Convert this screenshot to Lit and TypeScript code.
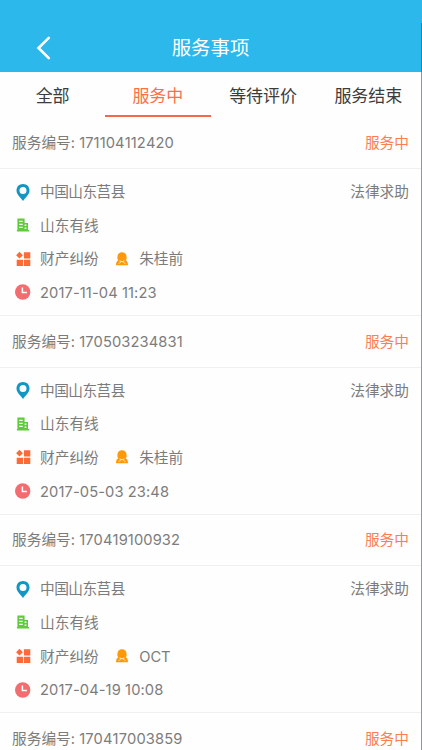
import { LitElement, html, css, svg } from "lit";
import { customElement, property, state } from "lit/decorators.js";

interface ServiceItem {
  id: string;
  status: string;
  place: string;
  kind: string;
  company: string;
  category: string;
  person: string;
  time: string;
}

const common = { status: "服务中", place: "中国山东莒县", kind: "法律求助", company: "山东有线", category: "财产纠纷" };
const ITEMS: ServiceItem[] = [
  { ...common, id: "171104112420", person: "朱桂前", time: "2017-11-04 11:23" },
  { ...common, id: "170503234831", person: "朱桂前", time: "2017-05-03 23:48" },
  { ...common, id: "170419100932", person: "OCT", time: "2017-04-19 10:08" },
];
const NEXT = { id: "170417003859", status: "服务中" };

const ICONS = {
  pin: svg`<path fill="#1296c4" fill-rule="evenodd" d="M8 0.1C4.1 0.1 1.5 2.9 1.5 6.6C1.5 10.4 5.2 13.4 8 16.9C10.8 13.4 14.5 10.4 14.5 6.6C14.5 2.9 11.9 0.1 8 0.1ZM8 3.1A3.5 3.5 0 1 1 8 10.1A3.5 3.5 0 1 1 8 3.1Z"/>`,
  building: svg`<path fill="#5fcb3c" fill-rule="evenodd" d="M2.4 1.4H9.6V6H13V13H14V14.4H1.9V13H2.4ZM4.2 3.8V5H7.7V3.8ZM4.2 6.8V8H7.7V6.8ZM4.2 9.8V11H7.7V9.8ZM9.6 7.5V8.9H11.4V7.5ZM9.6 10.6V12H11.4V10.6Z"/>`,
  grid: svg`<path fill="#fd6a38" d="M4.5 0.8L7.9 4.2L4.5 7.6L1.1 4.2ZM8.9 1.3H15.3V7.5H8.9ZM1.7 8.8H8V15.1H1.7ZM8.9 8.8H15.3V15.1H8.9Z"/>`,
  person: svg`<path fill="#fe9a0a" d="M8 1.3C10.8 1.3 12.6 3.3 12.6 5.9V8L11.7 9.2C13.2 10 14 11.4 14 14.3H2C2 11.4 2.8 10 4.3 9.2L3.4 8V5.9C3.4 3.3 5.2 1.3 8 1.3Z"/><path d="M5.6 9.9L8 10.8L10.4 9.9M6.6 11L4.8 12.8M9.4 11L11.2 12.8" fill="none" stroke="#fff" stroke-width="0.8"/>`,
  clock: svg`<circle cx="7.7" cy="8" r="7.7" fill="#f36c6f"/><path d="M7.4 3.4V8.4H11.9" fill="none" stroke="#fff" stroke-width="1.5"/>`,
};

@customElement("service-icon")
class ServiceIcon extends LitElement {
  static styles = css`
    :host { display: block; width: 16px; height: 17px; flex: none; }
    .glyph { display: block; overflow: visible; }
  `;
  @property() name: keyof typeof ICONS = "pin";
  render() {
    return html`<svg class="glyph" width="16" height="17" viewBox="0 0 16 17">${ICONS[this.name]}</svg>`;
  }
}

@customElement("service-head")
class ServiceHead extends LitElement {
  static styles = css`
    :host { height: 50.75px; padding: 0.5px 12px 0; display: flex; align-items: center; justify-content: space-between; box-sizing: border-box; color: #7c7c7c; font-size: 14.7px; line-height: 20px; }
    .num { font-kerning: none; letter-spacing: 0.1px; }
    .status { color: #fb7e52; }
  `;
  @property() number = "";
  @property() status = "";
  render() {
    return html`<span>服务编号: <span class="num">${this.number}</span></span><span class="status">${this.status}</span>`;
  }
}

@customElement("service-card")
class ServiceCard extends LitElement {
  static styles = css`
    :host { display: block; height: 198.6px; box-sizing: border-box; color: #7c7c7c; font-size: 14.7px; line-height: 20px; }
    .body { height: 147.85px; padding: 6px 12px 6px 15px; display: flex; flex-direction: column; box-sizing: border-box; border: solid #f0f0f0; border-width: 1px 0; }
    .row { height: 33.65px; display: flex; align-items: center; flex: none; }
    .text { margin-left: 9px; }
    .place { letter-spacing: -0.55px; }
    .time { font-kerning: none; letter-spacing: 0.1px; }
    .second { margin-left: 15px; }
    .person { margin-left: 9.5px; letter-spacing: -0.1px; }
    .kind { margin-left: auto; }
  `;
  @property({ attribute: false }) item!: ServiceItem;
  render() {
    const i = this.item;
    return html`
      <service-head number=${i.id} status=${i.status}></service-head>
      <div class="body">
        <div class="row"><service-icon name="pin"></service-icon><span class="text place">${i.place}</span><span class="kind">${i.kind}</span></div>
        <div class="row"><service-icon name="building"></service-icon><span class="text">${i.company}</span></div>
        <div class="row">
          <service-icon name="grid"></service-icon><span class="text">${i.category}</span>
          <service-icon class="second" name="person"></service-icon><span class="person">${i.person}</span>
        </div>
        <div class="row"><service-icon name="clock"></service-icon><span class="text time">${i.time}</span></div>
      </div>`;
  }
}

@customElement("app-root")
class AppRoot extends LitElement {
  static styles = css`
    :host { display: block; position: relative; width: 422px; height: 750px; overflow: hidden; background: #fefefe; box-sizing: border-box; padding-right: 1px; font-family: Inter, "Noto Sans CJK SC", sans-serif; font-weight: 400; }
    .bar { height: 72px; margin-right: -1px; padding: 23px 1px 0 0; box-sizing: border-box; background: #2cb8ea; color: #fff; display: grid; grid-template-columns: 86px 1fr 86px; align-items: center; text-align: center; }
    .back { display: block; margin-left: 36px; }
    .title { font-size: 19.4px; line-height: 28px; }
    .tabs { display: grid; grid-template-columns: repeat(4, 1fr); height: 45.5px; align-items: start; }
    .tab { height: 45px; box-sizing: border-box; text-align: center; font-size: 17px; line-height: 48px; color: #3c3c3c; border-bottom: 2px solid transparent; }
    .active { color: #fb7044; border-bottom-color: #f4694a; }
    .edge { position: absolute; top: 23px; right: 0; bottom: 0; width: 1px; background: rgba(70, 85, 90, 0.6); }
  `;
  @state() active = 1;
  render() {
    return html`
      <header class="bar">
        <svg class="back" width="16" height="24" viewBox="0 0 16 24"><path d="M12.8 1.8L2.5 12L12.8 22.2" fill="none" stroke="#fff" stroke-width="2.6" stroke-linecap="round" stroke-linejoin="miter"/></svg>
        <span class="title">服务事项</span>
      </header>
      <nav class="tabs">
        ${["全部", "服务中", "等待评价", "服务结束"].map(
          (t, n) => html`<div class="tab ${n === this.active ? "active" : ""}" @click=${() => (this.active = n)}>${t}</div>`
        )}
      </nav>
      <main>
        ${ITEMS.map((item) => html`<service-card .item=${item}></service-card>`)}
        <service-head number=${NEXT.id} status=${NEXT.status}></service-head>
      </main>
      <div class="edge"></div>`;
  }
}
